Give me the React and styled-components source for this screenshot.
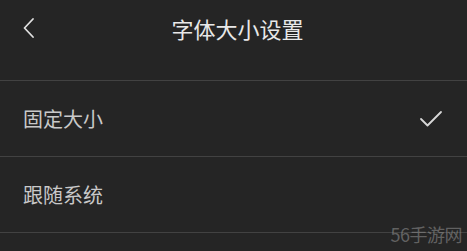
import React, { useState } from "react";
import styled, { createGlobalStyle } from "styled-components";

const GlobalStyle = createGlobalStyle`
  html, body {
    margin: 0;
    padding: 0;
    background: #252525;
  }
  body {
    font-family: "Noto Sans CJK SC", "Noto Sans", sans-serif;
  }
`;

const Screen = styled.div`
  position: relative;
  width: 467px;
  height: 251px;
  overflow: hidden;
  background: #252525;
`;

const Header = styled.div`
  height: 80px;
  border-bottom: 1px solid #424242;
`;

const TitleBar = styled.div`
  position: relative;
  height: 56px;
  padding-left: 8px;
  display: flex;
  align-items: center;
  justify-content: center;
`;

const BackButton = styled.button`
  position: absolute;
  left: 18px;
  top: 14px;
  width: 22px;
  height: 28px;
  padding: 0;
  border: none;
  background: none;
  display: flex;
  align-items: center;
  justify-content: center;
  cursor: pointer;
`;

const Title = styled.h1`
  margin: 0;
  font-size: 22px;
  font-weight: 400;
  color: #e8e8e8;
`;

const Option = styled.div`
  height: 75px;
  padding: 0 24px 0 23px;
  display: flex;
  align-items: center;
  justify-content: space-between;
  border-bottom: 1px solid #424242;
  cursor: pointer;
`;

const Label = styled.span`
  font-size: 20px;
  color: #c9c9c9;
`;

const Watermark = styled.div`
  position: absolute;
  right: 5px;
  bottom: 4px;
  font-size: 18px;
  color: rgba(150, 150, 150, 0.55);
  letter-spacing: -0.5px;
`;

const Chevron = () => (
  <svg width="14" height="22" viewBox="0 0 14 22">
    <path
      d="M11 2 L2.5 11 L11 20"
      fill="none"
      stroke="#e0e0e0"
      strokeWidth="1.8"
      strokeLinecap="round"
      strokeLinejoin="round"
    />
  </svg>
);

const Check = () => (
  <svg width="24" height="18" viewBox="0 0 24 18">
    <path
      d="M2 9 L8.5 15.5 L22 2"
      fill="none"
      stroke="#d8d8d8"
      strokeWidth="1.8"
      strokeLinecap="round"
      strokeLinejoin="round"
    />
  </svg>
);

const options = ["固定大小", "跟随系统"];

export default function App() {
  const [selected, setSelected] = useState(0);

  return (
    <Screen>
      <GlobalStyle />
      <Header>
        <TitleBar>
          <BackButton aria-label="返回">
            <Chevron />
          </BackButton>
          <Title>字体大小设置</Title>
        </TitleBar>
      </Header>
      {options.map((label, i) => (
        <Option key={label} onClick={() => setSelected(i)}>
          <Label>{label}</Label>
          {selected === i && <Check />}
        </Option>
      ))}
      <Watermark>56手游网</Watermark>
    </Screen>
  );
}
